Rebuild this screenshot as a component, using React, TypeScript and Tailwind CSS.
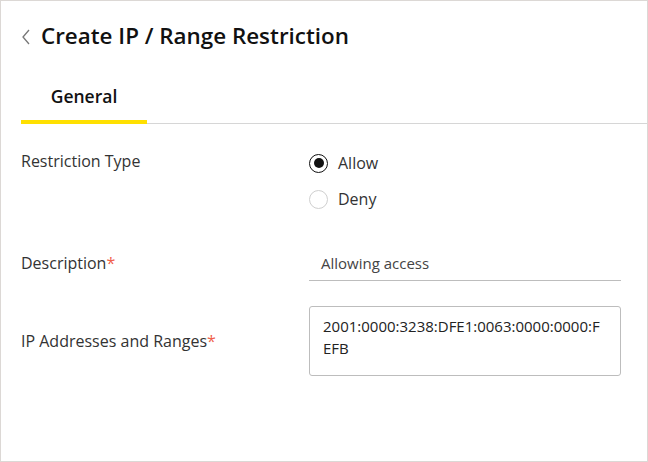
const Radio = ({ checked, label }: { checked: boolean; label: string }) => (
  <label className="flex items-center gap-[10px] h-[20px]">
    <span
      className={
        checked
          ? 'w-[19px] h-[19px] rounded-full border-[1.5px] border-[#111] flex items-center justify-center'
          : 'w-[19px] h-[19px] rounded-full border border-[#cfcfcf]'
      }
    >
      {checked && <span className="w-[10px] h-[10px] rounded-full bg-[#111]" />}
    </span>
    <span className="text-[16px] leading-[22px] text-[#333]">{label}</span>
  </label>
);

const App = () => {
  return (
    <div
      className="w-[648px] h-[462px] bg-white border border-[#dcd8d5] text-[#222] overflow-hidden"
      style={{ fontFamily: '"Open Sans", sans-serif' }}
    >
      <div className="flex items-center pl-[20px] pt-[18px] h-[52px]">
        <svg width="10" height="16" viewBox="0 0 10 16" className="mt-[1px]">
          <path d="M8 1 L2 8 L8 15" fill="none" stroke="#777" strokeWidth="1.3" />
        </svg>
        <h1 className="ml-[10px] text-[22.4px] leading-[30px] font-semibold text-[#111]">
          Create IP / Range Restriction
        </h1>
      </div>

      <div className="ml-[20px] mt-[31px] flex border-b border-[#d6d6d6]">
        <div className="w-[126px] pb-[14px] relative text-center">
          <span className="text-[17.5px] leading-[24px] font-semibold text-[#111]">General</span>
          <span className="absolute left-0 right-0 bottom-[-1px] h-[4px] bg-[#ffe000]" />
        </div>
      </div>

      <div className="pl-[20px] pr-[26px]">
        <div className="flex mt-[26px]">
          <div className="w-[288px] text-[16px] leading-[22px] text-[#333]">Restriction Type</div>
          <div className="flex flex-col gap-[16px] pt-[3px]">
            <Radio checked label="Allow" />
            <Radio checked={false} label="Deny" />
          </div>
        </div>

        <div className="flex items-start mt-[43px]">
          <div className="w-[288px] text-[16px] leading-[22px] text-[#333]">
            Description<span className="text-[#f0604a]">*</span>
          </div>
          <div className="flex-1 border-b border-[#bdbdbd] pl-[12px] pb-[6px] text-[15px] leading-[22px] text-[#444]">
            Allowing access
          </div>
        </div>

        <div className="flex items-center mt-[25px]">
          <div className="w-[288px] text-[16px] leading-[22px] text-[#333]">
            IP Addresses and Ranges<span className="text-[#f0604a]">*</span>
          </div>
          <div className="flex-1 h-[70px] border border-[#bdbdbd] rounded-[3px] px-[13px] pt-[8px] text-[15px] leading-[22px] text-[#222] break-all">
            2001:0000:3238:DFE1:0063:0000:0000:FEFB
          </div>
        </div>
      </div>
    </div>
  );
};

export default App;
